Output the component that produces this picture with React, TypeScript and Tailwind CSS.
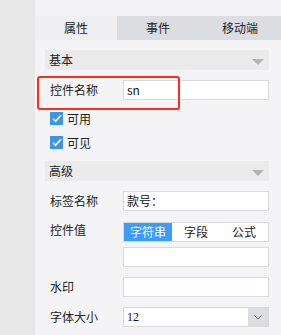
import { ReactNode } from "react";

const FONT = { fontFamily: '"Noto Sans CJK SC", "Noto Sans", sans-serif' };

function SectionHeader({ title }: { title: string }) {
  return (
    <div className="flex h-[20px] items-center justify-between bg-[#ebebeb] pl-[4px] pr-[5px]">
      <span className="text-[12px] leading-none text-[#222]">{title}</span>
      <svg width="12" height="6" viewBox="0 0 12 6" className="mt-[3px]">
        <path d="M0 0h12L6 6z" fill="#b4b4b4" />
      </svg>
    </div>
  );
}

function Row({ label, children, top = false }: { label: string; children: ReactNode; top?: boolean }) {
  return (
    <div className={`flex ${top ? "items-start" : "items-center"}`}>
      <span className={`w-[78px] shrink-0 pl-[5px] text-[12px] leading-none text-[#222] ${top ? "pt-[2px]" : ""}`}>
        {label}
      </span>
      <div className="flex-1">{children}</div>
    </div>
  );
}

function TextBox({ value = "" }: { value?: string }) {
  return (
    <div className="flex h-[20px] items-center border border-[#d9d9d9] bg-white pl-[3px] text-[12px] text-[#111]">
      {value}
    </div>
  );
}

function Check({ label }: { label: string }) {
  return (
    <div className="flex items-center gap-[4px] pl-[5px]">
      <span className="flex h-[13px] w-[13px] items-center justify-center bg-[#3d95ea]">
        <svg width="10" height="9" viewBox="0 0 10 9">
          <path d="M1 4.8l2.6 2.6L9 1.2" fill="none" stroke="#fff" strokeWidth="1.6" />
        </svg>
      </span>
      <span className="text-[12px] leading-none text-[#222]">{label}</span>
    </div>
  );
}

export default function App() {
  const tabs = ["属性", "事件", "移动端"];
  return (
    <div className="flex h-[335px] w-[281px] overflow-hidden bg-[#e8e8e8]" style={FONT}>
      <div className="w-[35px] shrink-0" />
      <div className="flex flex-1 flex-col bg-[#f4f4f6]">
        <div className="mt-[16px] flex h-[24px] bg-[#dcdde0]">
          {tabs.map((t, i) => (
            <div
              key={t}
              className={`flex flex-1 items-center justify-center text-[12px] text-[#222] ${i === 0 ? "bg-[#efeff1]" : ""}`}
            >
              {t}
            </div>
          ))}
        </div>

        <div className="flex flex-col pl-[10px] pr-[12px] pt-[10px]">
          <SectionHeader title="基本" />

          <div className="relative mt-[10px]">
            <Row label="控件名称">
              <TextBox value="sn" />
            </Row>
            <div className="pointer-events-none absolute left-[-8px] top-[-4px] h-[34px] w-[143px] rounded-[3px] border-2 border-[#ff2a1f]" />
          </div>

          <div className="mt-[12px]">
            <Check label="可用" />
          </div>
          <div className="mt-[11px]">
            <Check label="可见" />
          </div>

          <div className="mt-[12px]">
            <SectionHeader title="高级" />
          </div>

          <div className="mt-[10px]">
            <Row label="标签名称">
              <TextBox value="款号：" />
            </Row>
          </div>

          <div className="mt-[11px]">
            <Row label="控件值" top>
              <div className="flex h-[20px] border border-[#d9d9d9] bg-white text-[12px]">
                <div className="flex w-[48px] items-center justify-center bg-[#3d9cf5] text-white">字符串</div>
                <div className="flex flex-1 items-center justify-center text-[#222]">字段</div>
                <div className="flex flex-1 items-center justify-center text-[#222]">公式</div>
              </div>
              <div className="mt-[5px]">
                <TextBox />
              </div>
            </Row>
          </div>

          <div className="mt-[10px]">
            <Row label="水印">
              <TextBox />
            </Row>
          </div>

          <div className="mt-[10px]">
            <Row label="字体大小">
              <div className="flex h-[20px] border border-[#d9d9d9] bg-white">
                <span
                  className="flex flex-1 items-center pl-[3px] text-[12px] text-[#111]"
                  style={{ fontFamily: '"Liberation Serif", serif' }}
                >
                  12
                </span>
                <span className="flex w-[20px] items-center justify-center bg-[#dcdde0]">
                  <svg width="8" height="5" viewBox="0 0 8 5">
                    <path d="M0.5 0.5L4 4 7.5 0.5" fill="none" stroke="#666" strokeWidth="1" />
                  </svg>
                </span>
              </div>
            </Row>
          </div>
        </div>
      </div>
    </div>
  );
}
